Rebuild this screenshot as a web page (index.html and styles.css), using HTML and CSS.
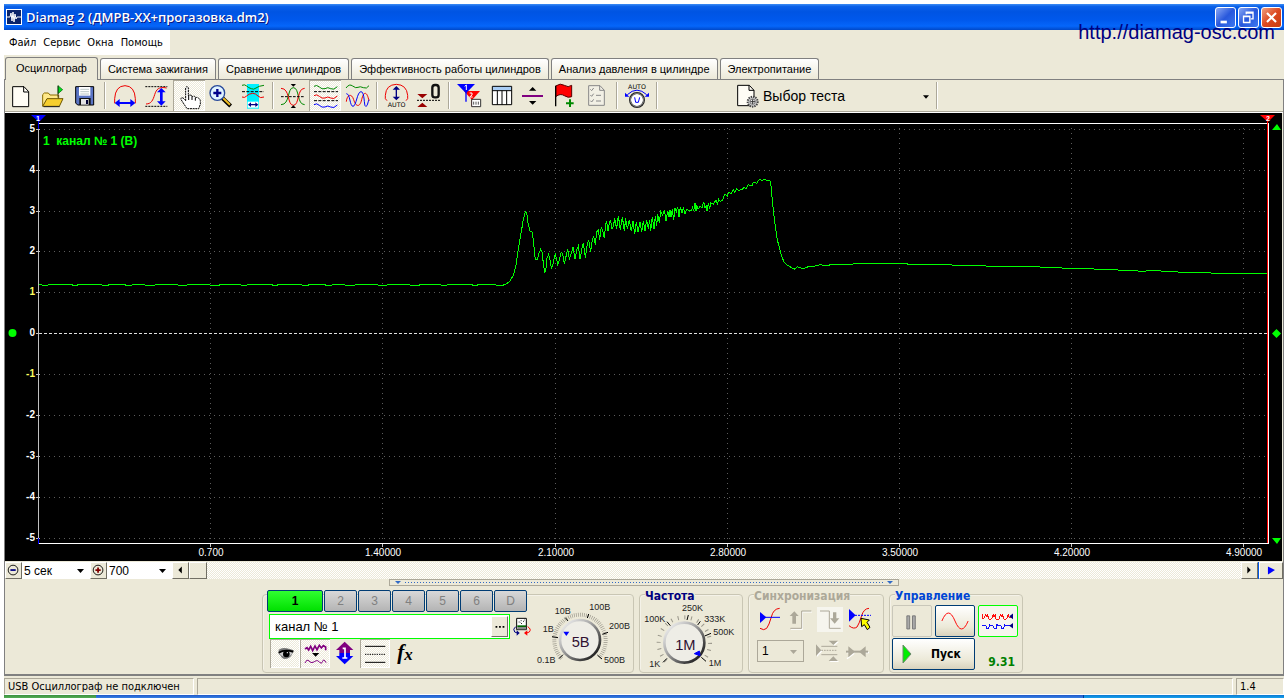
FILE: index.html
```html
<!DOCTYPE html>
<html lang="ru">
<head>
<meta charset="utf-8">
<title>Diamag 2</title>
<link rel="stylesheet" href="styles.css">
</head>
<body>
<div class="window">
  <header class="titlebar">
    <svg class="app-icon" viewBox="0 0 16 16"><rect x=".5" y=".5" width="15" height="15" fill="#0a246a" stroke="#fff"/><path d="M1 8h3l1-4 1 8 1-9 1 10 1-8 1 5 1-2h4" fill="none" stroke="#fff"/></svg>
    <h1 class="title">Diamag 2 (ДМРВ-ХХ+прогазовка.dm2)</h1>
    <div class="win-buttons">
      <button class="win-btn" aria-label="Свернуть"><svg viewBox="0 0 21 21"><path d="M5 14h7v3H5z" fill="#fff"/></svg></button>
      <button class="win-btn" aria-label="Восстановить"><svg viewBox="0 0 21 21"><path d="M8 7V4.500h7.500V12H13M8 5.500h7" fill="none" stroke="#fff" stroke-width="1.500"/><path d="M5 9h7v7H5zM5 9.500h7" fill="none" stroke="#fff" stroke-width="1.500"/></svg></button>
      <button class="win-btn win-close" aria-label="Закрыть"><svg viewBox="0 0 21 21"><path d="M5.500 5.500l10 10M15.500 5.500l-10 10" stroke="#fff" stroke-width="2.400"/></svg></button>
    </div>
    <a class="site" href="#">http://diamag-osc.com</a>
  </header>

  <nav class="menu">
    <button>Файл</button><button>Сервис</button><button>Окна</button><button>Помощь</button>
  </nav>

  <div class="tabs" role="tablist">
    <button class="tab active" role="tab" aria-selected="true">Осциллограф</button>
    <button class="tab" role="tab">Система зажигания</button>
    <button class="tab" role="tab">Сравнение цилиндров</button>
    <button class="tab" role="tab">Эффективность работы цилиндров</button>
    <button class="tab" role="tab">Анализ давления в цилиндре</button>
    <button class="tab" role="tab">Электропитание</button>
  </div>

  <main class="content">
    <div class="toolbar">
      <button class="tool" aria-label="Новый"><svg viewBox="15 240 96 93"><path d="M38 260h34l14 15v45H38z" fill="#fffdf5" stroke="#000" stroke-width="3"/><path d="M71 260v16h15" fill="none" stroke="#000" stroke-width="3"/></svg></button>
      <button class="tool" aria-label="Открыть"><svg viewBox="111 240 96 93"><path d="M128 318v-34l5-5h12l5 6h26v12" fill="#ffe98a" stroke="#8a6d00" stroke-width="3"/><path d="M128 319l13-23h48l-11 23z" fill="#f7cf2e" stroke="#6b5500" stroke-width="3"/><path d="M131 320h48" stroke="#222" stroke-width="3"/><path d="M174 257l14 12-14 12z" fill="#00e020" stroke="#006000" stroke-width="2"/><path d="M174 257v36" stroke="#000" stroke-width="2"/></svg></button>
      <button class="tool" aria-label="Сохранить"><svg viewBox="207 240 96 93"><path d="M227 260h54v55h-48l-6-6z" fill="#5a74c4" stroke="#000" stroke-width="3"/><path d="M237 261h34v26h-34z" fill="#fff"/><path d="M241 268h26M241 275h26M241 282h26" stroke="#9aa" stroke-width="2"/><path d="M238 294h34v21h-34z" fill="#111"/><path d="M243 297h23v17h-23z" fill="#e4e4e4"/><path d="M258 300h6v12h-6z" fill="#003"/></svg></button>
      <span class="sep"></span>
      <button class="tool" aria-label="Растянуть по горизонтали"><svg viewBox="327 240 96 93"><path d="M344 310v-14q2-38 31-39 29 1 31 39v14" fill="none" stroke="#e00" stroke-width="3"/><path d="M344 309l15-12v9h32v-9l15 12-15 12v-9h-32v9z" fill="#00f"/></svg></button>
      <button class="tool" aria-label="Растянуть по вертикали"><svg viewBox="423 240 96 93"><path d="M436 260h66M436 319h66" stroke="#000" stroke-width="3" stroke-dasharray="6 3"/><path d="M438 312c16 0 21-12 26-28s12-25 36-20" fill="none" stroke="#e00" stroke-width="3"/><path d="M484 264l13 13h-9v27h9l-13 13-13-13h9v-27h-9z" fill="#00f"/></svg></button>
      <button class="tool pressed" aria-label="Рука"><svg viewBox="519 240 96 93"><path d="M557 302v-39q4-6 8 0v25q4-6 11 0v3q5-5 10 0v3q5-4 10 1 5 2 5 9v9l-5 13h-35l-19-29q3-7 10-1z" fill="#fff" stroke="#000" stroke-width="3" stroke-dasharray="6 2"/><path d="M566 286v14M576 290v10M586 294v8" stroke="#000" stroke-width="3"/></svg></button>
      <button class="tool" aria-label="Увеличить"><svg viewBox="615 240 96 93"><path d="M667 294l25 24" stroke="#000" stroke-width="12"/><path d="M669 294l21 20" stroke="#eebc20" stroke-width="6"/><circle cx="652" cy="279" r="22" fill="#dff3ff" stroke="#26489a" stroke-width="4"/><path d="M640 279h24M652 267v24" stroke="#00008b" stroke-width="7"/></svg></button>
      <button class="tool" aria-label="Период"><svg viewBox="711 240 96 93"><path d="M741 252h36v74h-36z" fill="#00f0ff"/><path d="M726 256q8-4 14 2t14 8q7 4 14-2t24-8" fill="none" stroke="#080" stroke-width="3"/><path d="M726 275h66" stroke="#000" stroke-width="3" stroke-dasharray="9 4"/><path d="M726 291q8 4 14-3t18-8q9 0 16 8t18 3" fill="none" stroke="#e00" stroke-width="3"/><path d="M743 305h32v18h-32z" fill="#fff"/><path d="M744 314l9-7v5h13v-5l9 7-9 7v-5h-13v5z" fill="#008"/></svg></button>
      <span class="sep"></span>
      <button class="tool" aria-label="Центрировать"><svg viewBox="831 240 96 93"><path d="M843 314c28 0 18-51 37-51s10 51 34 51" fill="none" stroke="#080" stroke-width="3"/><path d="M843 265c28 0 18 51 37 51s10-51 34-51" fill="none" stroke="#e00" stroke-width="3"/><path d="M843 290h72" stroke="#000" stroke-width="3" stroke-dasharray="8 4"/><path d="M872 252h16l-8 8zM872 324h16l-8-8z"/></svg></button>
      <button class="tool pressed" aria-label="Раздельно"><svg viewBox="-33 75 96 93"><g fill="none" stroke-width="3"><path d="M-18 94q8-6 16 2t17 5q8-6 17 0t20-6" stroke="#080"/><path d="M-18 122q8-6 16 2t17 5q8-6 17 0t20-6" stroke="#e00"/><path d="M-18 149q8-6 16 2t17 5q8-6 17 0t20-6" stroke="#00f"/><path d="M-18 110h72M-18 137h72" stroke="#000" stroke-dasharray="9 4"/></g></svg></button>
      <button class="tool" aria-label="Совместно"><svg viewBox="63 75 96 93"><g fill="none" stroke-width="3"><path d="M78 99q10-14 20-6t16 4 16 1 17-6" stroke="#080"/><path d="M79 140c2-22 16-26 22-6s18 26 24 0 16-26 22 4" stroke="#e00"/><path d="M79 116c12 0 10 38 20 38s12-44 24-44 8 44 14 44 6-12 10-20" stroke="#00f"/></g></svg></button>
      <span class="sep"></span>
      <button class="tool" aria-label="Авто масштаб"><svg viewBox="183 75 96 93"><path d="M201 137l-5-6v-10q2-32 33-33 31 1 34 33v10l-5 6" fill="none" stroke="#e00" stroke-width="3"/><path d="M229 93l11 11h-9v21h9l-11 11-11-11h9v-21h-9z" fill="#000080"/><text class="ico-text" x="230" y="156" text-anchor="middle">AUTO</text></svg></button>
      <button class="tool" aria-label="Ноль"><svg viewBox="279 75 96 93"><path d="M292 117h30l-15 13zM292 156h30l-15-13z" fill="#900"/><path d="M291 136h70" stroke="#000" stroke-width="3" stroke-dasharray="6 3"/><rect x="337" y="90" width="19" height="37" rx="8" fill="none" stroke="#111" stroke-width="7"/></svg></button>
      <span class="sep"></span>
      <button class="tool" aria-label="Маркеры"><svg viewBox="399 75 96 93"><path d="M432 108h48l-24 27z" fill="#f00"/><path d="M456 125v29" stroke="#f00" stroke-width="4"/><path d="M411 87h54l-27 28z" fill="#00f"/><path d="M438 112v28" stroke="#00f" stroke-width="4"/><path d="M434 94l5-4v15" fill="none" stroke="#fff" stroke-width="3"/><path d="M449 114h7v6l-7 6h9" fill="none" stroke="#fff" stroke-width="3"/><path d="M455 133h27v22h-27z" fill="#fff" stroke="#333" stroke-width="3"/><path d="M461 140v9M468 140v9M475 140v9" stroke="#555" stroke-width="3"/></svg></button>
      <button class="tool" aria-label="Таблица"><svg viewBox="495 75 96 93"><path d="M517 94h58v55h-58z" fill="#fff"/><path d="M517 94h58v12h-58z" fill="#a9cdf5"/><path d="M517 94h58v55h-58zM517 107h58M532 107v42M546 107v42M560 107v42" fill="none" stroke="#000" stroke-width="3"/></svg></button>
      <button class="tool" aria-label="Разделить"><svg viewBox="591 75 96 93"><path d="M627 107h22l-11-11zM627 138h22l-11 11z"/><path d="M606 123h63" stroke="#800080" stroke-width="6"/></svg></button>
      <button class="tool" aria-label="Добавить флаг"><svg viewBox="687 75 96 93"><path d="M707 93q14-10 26-2t22 0v34q-10 5-22-3t-26 3z" fill="#f00" stroke="#500" stroke-width="3"/><path d="M707 92v62" stroke="#000" stroke-width="4"/><path d="M738 145h23M750 133v23" stroke="#080" stroke-width="6"/></svg></button>
      <button class="tool" aria-label="Отчет"><svg viewBox="783 75 96 93"><path d="M806 92h34l13 14v45h-47z" fill="#f2f0e5" stroke="#888" stroke-width="3"/><path d="M839 92v14h14M811 103l4 4 6-8M811 120l4 4 6-8M811 137l4 4 6-8M828 121h15M828 138h15" fill="none" stroke="#888" stroke-width="3"/></svg></button>
      <span class="sep"></span>
      <button class="tool" aria-label="Авто"><svg viewBox="903 75 96 93"><text class="ico-text" x="951" y="101" text-anchor="middle">AUTO</text><path d="M922 119q29-27 58 0" fill="none" stroke="#00f" stroke-width="3"/><path d="M915 113v12h13zM987 113v12h-13z" fill="#00f"/><circle cx="951" cy="135" r="21" fill="#fff" stroke="#222" stroke-width="6"/><circle cx="951" cy="135" r="20" fill="none" stroke="#aaa" stroke-width="2"/><path d="M944 127l3 15h8l4-15" fill="none" stroke="#00f" stroke-width="3"/></svg></button>
      <span class="sep"></span>
      <label class="test">
        <svg class="test-icon" viewBox="261 87 69 72"><path d="M263 91h35l14 15v46h-49z" fill="#fffdf5" stroke="#000" stroke-width="3"/><path d="M297 91v15h15" fill="none" stroke="#000" stroke-width="3"/><circle cx="308" cy="140" r="15" fill="#c8c8c8" stroke="#444" stroke-width="6" stroke-dasharray="4 3"/><circle cx="308" cy="140" r="8" fill="#eee" stroke="#444" stroke-width="2"/><path d="M308 133v14M301 140h14" stroke="#333" stroke-width="3"/></svg>
        <select class="test-select" aria-label="Выбор теста"><option>Выбор теста</option></select>
        <svg class="caret-small" viewBox="0 0 7 4"><path d="M0 0h7L3.500 4z"/></svg>
      </label>
      <span class="sep"></span>
    </div>

    <svg class="chart" viewBox="5 113 1277 448" role="img" aria-label="Осциллограмма">
      <rect x="5" y="113" width="1277" height="448"/>
      <g class="grid">
        <path d="M44 129.500H1266M44 170.500H1266M44 211.500H1266M44 251.500H1266M44 292.500H1266M44 374.500H1266M44 415.500H1266M44 456.500H1266M44 497.500H1266M44 538.500H1266"/>
        <path d="M210.500 128V542M382.500 128V542M555.500 128V542M727.500 128V542M899.500 128V542M1071.500 128V542M1243.500 128V542"/>
      </g>
      <path class="zero" d="M39 333.500H1267"/>
      <path class="frame" d="M38 123.500H1267M38 543.500H1269M1268.500 123V544"/>
      <path class="axis" d="M38.500 123V544M36 129.500h4M36 170.500h4M36 211.500h4M36 251.500h4M36 292.500h4M36 333.500h4M36 374.500h4M36 415.500h4M36 456.500h4M36 497.500h4M36 538.500h4M210.500 544v3M382.500 544v3M555.500 544v3M727.500 544v3M899.500 544v3M1071.500 544v3M1243.500 544v3"/>
      <path d="M1267.500 118V543" stroke="#f00"/>
      <path d="M38.500 118v11M38.500 538v6" stroke="#00f"/>
      <path d="M31 115h15l-7 7z" fill="#00f"/><path d="M1260 115h15l-7 7z" fill="#f00"/>
      <g class="mark"><text x="38" y="121">1</text><text x="1268" y="121">2</text></g>
      <path d="M1272 130h9l-4-6zM1272 538h9l-4 6zM1272 333.500l4.500-4.500 4.500 4.500-4.500 4.500z" fill="#0f0"/>
      <circle cx="12.500" cy="333" r="4" fill="#0f0"/>
      <g class="y-labels"><text x="35" y="132">5</text><text x="35" y="173">4</text><text x="35" y="214">3</text><text x="35" y="254">2</text><text class="unit" x="35" y="295">1</text><text x="35" y="336">0</text><text class="unit" x="35" y="377">-1</text><text x="35" y="418">-2</text><text x="35" y="459">-3</text><text x="35" y="500">-4</text><text x="35" y="541">-5</text></g>
      <g class="x-labels"><text x="211" y="556">0.700</text><text x="383" y="556">1.40000</text><text x="556" y="556">2.10000</text><text x="728" y="556">2.80000</text><text x="900" y="556">3.50000</text><text x="1072" y="556">4.20000</text><text x="1244" y="556">4.90000</text></g>
      <text class="ch-name" x="43" y="145">1&#160; канал № 1 (В)</text>
      <polyline class="trace" points="39,284 45,286 51,284 59,285 67,284 70,284 75,286 80,284 90,284 96,284 98,284 106,286 111,284 116,285 122,284 129,286 135,284 141,284 145,285 152,286 158,284 166,285 174,284 178,285 184,286 190,284 198,285 205,284 210,285 217,286 222,284 231,285 238,284 244,286 250,284 258,285 266,284 270,284 275,286 280,284 290,284 298,284 306,286 311,284 316,285 322,284 329,286 335,284 341,284 345,285 352,286 358,284 366,285 374,284 378,285 384,286 390,284 398,285 405,284 410,285 417,286 422,284 431,285 438,284 444,286 450,284 458,285 466,284 470,284 475,286 480,284 490,284"/>
      <svg x="490" y="160" width="340" height="130" viewBox="0 0 1020 390"><polyline class="trace-fine" points="0,373 18,375 36,377 50,371 60,363 70,346 78,315 86,260 94,215 100,178 106,154 110,158 114,190 120,213 126,216 130,240 136,300 142,298 147,280 152,268 156,275 160,310 164,340 168,325 171,295 176,283 180,300 184,325 188,318 192,297 196,283 200,297 203,313 208,300 213,278 218,280 223,313 229,285 233,268 238,297 244,280 249,262 255,298 260,270 265,258 270,298 276,265 280,248 286,293 291,258 296,240 302,275 307,240 311,228 316,255 320,215 325,210 329,240 334,200 338,212 343,235 347,190 350,184 354,213 358,188 362,182 366,208 370,200 374,175 380,207 385,167 391,210 397,170 403,213 407,175 412,208 418,180 424,214 429,183 434,223 439,186 444,216 450,187 455,217 460,183 465,214 470,180 475,207 479,180 482,214 487,170 492,207 496,168 500,198 503,163 508,188 512,155 518,165 523,150 528,182 533,152 537,172 540,150 543,172 547,148 551,180 555,145 559,155 563,140 567,170 571,142 576,158 580,142 585,163 590,148 598,152 605,150 608,142 611,153 615,130 618,152 620,135 624,148 630,140 637,142 641,125 645,145 649,138 651,152 655,128 659,148 662,128 670,133 678,120 682,132 686,118 690,124 698,120 704,103 712,108 716,98 724,100 730,90 735,97 740,86 746,92 756,88 762,82 768,86 775,74 786,78 790,66 800,70 808,58 816,62 822,58 828,60 838,60 842,66 846,110 850,150 856,200 862,240 868,262 874,287 882,305 890,315 900,320 913,328 922,320 940,326 955,320 975,318 990,314 1005,317 1020,315"/></svg>
      <polyline class="trace" points="829,265 834,264 838,265 843,264 850,265 856,263 862,264 870,263 880,264 888,263 896,264 904,263 911,265 918,264 926,265 932,264 940,265 948,264 956,266 964,265 972,266 982,265 990,267 998,266 1010,267 1018,266 1028,267 1036,266 1044,268 1052,267 1062,268 1070,268 1080,269 1090,268 1098,270 1108,269 1118,270 1128,270 1138,271 1146,271 1156,270 1166,272 1174,271 1182,273 1192,272 1200,273 1208,272 1214,274 1224,273 1232,274 1242,273 1250,274 1258,273 1267,273"/>
    </svg>

    <div class="scroll-row">
      <button class="raised" aria-label="Уменьшить"><svg viewBox="0 0 17 17"><circle cx="8" cy="8" r="5.500" fill="none" stroke="#000"/><path d="M5 8h6" stroke="#000080" stroke-width="2"/></svg></button>
      <label class="combo range"><select aria-label="Длительность"><option>5 сек</option></select><svg class="caret" viewBox="0 0 7 4"><path d="M0 0h7L3.500 4z"/></svg></label>
      <button class="raised" aria-label="Увеличить"><svg viewBox="0 0 17 17"><circle cx="8" cy="8" r="5.500" fill="none" stroke="#000"/><path d="M5 8h6M8 5v6" stroke="#800000" stroke-width="2"/></svg></button>
      <label class="combo step"><select aria-label="Шаг"><option>700</option></select><svg class="caret" viewBox="0 0 7 4"><path d="M0 0h7L3.500 4z"/></svg></label>
      <button class="raised" aria-label="Влево"><svg viewBox="0 0 17 17"><path d="M10 4v8L6 8z"/></svg></button>
      <span class="raised thumb"></span>
      <span class="track"></span>
      <button class="raised" aria-label="Вправо"><svg viewBox="0 0 17 17"><path d="M6 4v8l4-4z"/></svg></button>
      <span class="mark-line"></span>
      <button class="raised play" aria-label="Воспроизвести"><svg viewBox="0 0 17 17"><path d="M5 4v9l8-5z" fill="#00f"/></svg></button>
    </div>

    <div class="splitter"><i></i><span></span><i></i></div>

    <div class="panels">
      <section class="group channel">
        <div class="channel-left">
          <div class="channels">
            <button class="ch on">1</button><button class="ch">2</button><button class="ch">3</button><button class="ch">4</button><button class="ch">5</button><button class="ch">6</button><button class="ch">D</button>
          </div>
          <div class="name-row">
            <div class="name-box"><input type="text" value="канал № 1" aria-label="Имя канала"><button class="raised dots" aria-label="Выбрать"><svg viewBox="0 0 17 19"><path d="M4 9h2v2H4zM8 9h2v2H8zM12 9h2v2h-2z"/></svg></button></div>
            <button class="plain swap" aria-label="Датчик"><svg viewBox="786 136 60 63"><path d="M800 143h29v34h-29z" fill="#fff" stroke="#000" stroke-width="3"/><path d="M802 164h26v5h-26z" fill="#060"/><path d="M802 169h26v7h-26z" fill="#888"/><path d="M806 154h3M812 150h3M819 152h3M822 148h2M812 156l4 4" stroke="#333" stroke-width="3"/><path d="M797 168q-10 7-3 16l8 3" fill="none" stroke="#000080" stroke-width="3"/><path d="M800 179l9 8-9 8z" fill="#000080"/><path d="M833 168q12 7 5 16l-8 3" fill="none" stroke="#f00" stroke-width="3"/><path d="M832 179l-10 8 10 8z" fill="#f00"/></svg></button>
          </div>
          <div class="ch-tools">
            <button class="ch-tool pressed" aria-label="Показать"><svg viewBox="60 210 90 87"><path d="M86 242q10-8 24-4l12 3 9 3-2 6q-6 20-24 20-10-1-13-10l-6-5z" fill="#777"/><path d="M86 252q16-14 42 0-8 12-22 12-12-2-20-12z" fill="#ccc"/><circle cx="109" cy="255" r="10"/><path d="M86 251q18-11 44-3" fill="none" stroke="#000" stroke-width="5"/><circle cx="112" cy="251" r="2" fill="#fff"/></svg></button>
            <button class="ch-tool pressed" aria-label="Фильтр"><svg viewBox="150 210 90 87"><path d="M165 240l6-4 5 7 6-11 6 13 7-14 6 11 7-13 6 8 6-7 7 4v10" fill="none" stroke="#800080" stroke-width="5"/><path d="M186 252h22l-11 11z"/><path d="M165 282q6-13 12-6t12 4 10-5 10 5 9-3 10 4" fill="none" stroke="#800080" stroke-width="3"/></svg></button>
            <button class="ch-tool" aria-label="Сдвиг"><svg viewBox="240 210 90 87"><path d="M284 218l26 25h-10v9h-32v-9h-10z" fill="#800080"/><path d="M284 286l26-25h-10v-9h-32v9h-10z" fill="#00f"/><path d="M278 238h7v27M277 267h15" fill="none" stroke="#fff" stroke-width="5"/></svg></button>
            <button class="ch-tool pressed" aria-label="Линии"><svg viewBox="330 210 90 87"><path d="M345 232h61M345 280h61" stroke="#000" stroke-width="3"/><path d="M345 256h61" stroke="#000" stroke-width="3" stroke-dasharray="4 3"/></svg></button>
            <button class="ch-tool fx"><i>f</i><sub>x</sub></button>
          </div>
        </div>
        <svg class="dial" viewBox="12 21 294 240" role="img" aria-label="Диапазон">
          <defs><linearGradient id="rim" x1="0" y1="0" x2="1" y2="1"><stop offset="0" stop-color="#fff"/><stop offset=".4" stop-color="#aaa"/><stop offset="1" stop-color="#000"/></linearGradient></defs>
          <path class="ticks" d="M95 220A77 77 0 1 1 205 220" stroke-dasharray="2 4"/>
          <path class="major" d="M99 209l-12 12M84 158l-18-3M114 108l-8-10M172 99l4-12M217 148l17-6M202 210l14 12"/>
          <circle cx="150" cy="165" r="60" fill="#eeede6" stroke="url(#rim)" stroke-width="8"/>
          <path d="M100 140h18l-9 13z" fill="#00f"/>
          <g class="dial-labels"><text x="21" y="233">0.1В</text><text x="38" y="142">1В</text><text x="74" y="86">10В</text><text x="178" y="75">100В</text><text x="237" y="133">200В</text><text x="222" y="235">500В</text></g>
          <text class="dial-value" x="152" y="186">5В</text>
        </svg>
      </section>

      <section class="group freq">
        <h2 class="legend">Частота</h2>
        <svg class="dial-freq" viewBox="330 45 306 216" role="img" aria-label="Частота">
          <path class="ticks" d="M408 228A77 77 0 1 1 518 228" stroke-dasharray="3 17"/>
          <path class="major" d="M411 220l-12 12M421 122l-10-12M471 105l4-15M503 120l8-11M524 153l19-8M514 217l14 12"/>
          <circle cx="463" cy="173" r="60" fill="#eeede6" stroke="url(#rim)" stroke-width="8"/>
          <path d="M493 206l15-8 2 14z" fill="#00f" stroke="#00f" stroke-width="3"/>
          <g class="dial-labels"><text x="343" y="112">100K</text><text x="456" y="79">250K</text><text x="523" y="112">333K</text><text x="550" y="151">500K</text><text x="358" y="245">1K</text><text x="536" y="242">1M</text></g>
          <text class="dial-value" x="466" y="194">1M</text>
        </svg>
      </section>

      <section class="group sync">
        <h2 class="legend muted">Синхронизация</h2>
        <div class="sync-row">
          <button class="plain sync-btn" aria-label="Уровень"><svg viewBox="45 105 90 90"><path d="M60 175q12 8 20 0 7-9 14-34 6-25 25-26" fill="none" stroke="#e00" stroke-width="3"/><path d="M60 142h60" stroke="#00f" stroke-width="3"/><path d="M60 126v33l19-17z" fill="#00f"/></svg></button>
          <button class="plain sync-btn" aria-label="Фронт" disabled><svg viewBox="135 105 90 90"><path d="M153 178h34v-52h29" fill="none" stroke="#fff" stroke-width="3"/><path d="M151 175h34v-52h29" fill="none" stroke="#aca899" stroke-width="3"/><path d="M163 124l13 14h-8v23h-11v-23h-8z" fill="#aca899"/></svg></button>
          <button class="plain sync-btn" aria-label="Спад" disabled><svg viewBox="228 105 90 90"><path class="dither-box" d="M234 111h78v75h-78z"/><path d="M243 123h28v52h34" fill="none" stroke="#aca899" stroke-width="3"/><path d="M282 127h10v18h9l-14 16-14-16h9z" fill="#aca899"/></svg></button>
          <button class="plain sync-btn" aria-label="Захват"><svg viewBox="318 105 90 90"><path d="M330 167q14 12 24 4 6-8 14-34 6-21 22-22" fill="none" stroke="#e00" stroke-width="3"/><path d="M330 136h66" stroke="#00f" stroke-width="3" stroke-dasharray="6 3"/><path d="M330 117v38l20-19z" fill="#00f"/><path d="M366 145l25 5-7 7 9 15-8 7-9-15-8 6z" fill="#ff0" stroke="#000" stroke-width="3"/></svg></button>
        </div>
        <div class="sync-row">
          <label class="sync-select"><select aria-label="Канал синхронизации"><option>1</option></select><svg class="caret" viewBox="0 0 7 4"><path d="M0 0h7L3.500 4z" fill="#aca899"/></svg></label>
          <button class="plain sync-btn" aria-label="Ширина" disabled><svg viewBox="216 201 90 90"><g transform="translate(3 3)" fill="#fff"><path d="M228 223v35l16-17zM266 212h28l-14 13zM266 273h28l-14-14z"/></g><path d="M228 223v35l16-17zM266 212h28l-14 13zM266 273h28l-14-14z" fill="#aca899"/><path d="M244 229h48M244 254h48" stroke="#aca899" stroke-width="3"/><path d="M244 241h48" stroke="#aca899" stroke-width="3" stroke-dasharray="5 3"/></svg></button>
          <button class="plain sync-btn" aria-label="Сжать" disabled><svg viewBox="306 201 90 90"><path d="M321 248h24M363 248h24M321 266l20-15" stroke="#fff" stroke-width="4"/><path d="M318 245h66" stroke="#aca899" stroke-width="6"/><path d="M325 229v33l20-17zM377 229v33l-20-17z" fill="#aca899"/></svg></button>
        </div>
      </section>

      <section class="group control">
        <h2 class="legend blue">Управление</h2>
        <div class="control-grid">
          <button class="big off" aria-label="Пауза" disabled><svg viewBox="0 0 40 32"><path d="M14.500 10.500h3v14h-3zM20.500 10.500h3v14h-3z" fill="#aaa" stroke="#777"/></svg></button>
          <button class="big" aria-label="Однократно"><svg viewBox="0 0 40 32"><path d="M6 16q7-17 14 0t14 0" fill="none" stroke="#f00"/></svg></button>
          <button class="big green" aria-label="Непрерывно"><svg viewBox="0 0 40 32"><g class="crisp" fill="none"><path d="M3 8v5h2l2-4 1 3 1-3 1 5h3l2-5 1 3 1-3 1 5h3l2-5 1 3 1-3 1 5h3l2-5 1 3h4" stroke="#f00"/><path d="M3 21h4l1 3h2l1-5 1 2h3l1 3h2l1-5 1 2h3l1 3h2l1-5 1 2h6" stroke="#00f"/></g><path d="M36 8v6l-4-3zM36 18v6l-4-3z" fill="#000080"/></svg></button>
          <button class="big start"><svg viewBox="0 0 12 20"><path d="M2 1v18l8-9z" fill="#0e0" stroke="#6a8a6a"/></svg>Пуск</button>
          <output class="rate">9.31</output>
        </div>
      </section>
    </div>
  </main>

  <footer class="status">
    <span class="cell first">USB Осциллограф не подключен</span>
    <span class="cell wide"></span>
    <span class="cell last">1.4</span>
  </footer>
</div>
<div class="taskbar"><span class="start-edge"></span><span class="tasks"></span><span class="tray"></span></div>
</body>
</html>
```
FILE: styles.css
```css
* { box-sizing: border-box; }
body {
  margin: 0;
  background: #fff;
  color: #000;
  font: 11px "Liberation Sans", Arial, sans-serif;
}
button, select, input { font: inherit; color: inherit; margin: 0; padding: 0; border: 0; background: none; border-radius: 0; }
select { appearance: none; width: 100%; height: 100%; }
svg { display: block; }
h1, h2 { margin: 0; }

.window { margin: 4px 4px 0; background: #ece9d8; }

.titlebar {
  position: relative;
  display: flex;
  align-items: center;
  gap: 4px;
  height: 26px;
  padding: 0 2px;
  background: linear-gradient(#3c8cf4, #0a60e8 10%, #0054e3 30%, #0058ec 60%, #0566fa 85%, #0048c8);
}
.app-icon { width: 16px; height: 16px; }
.title { flex: 1; color: #fff; font: 600 13px "Open Sans", "Noto Sans", sans-serif; text-shadow: 1px 1px #0a1883; }
.win-buttons { display: flex; gap: 2px; }
.win-btn { width: 21px; height: 21px; border: 1px solid #fff; border-radius: 3px; background: linear-gradient(135deg, #8aa8f4, #2858dc 50%, #3c78f0); }
.win-btn svg { width: 100%; height: 100%; }
.win-close { background: linear-gradient(135deg, #f0a080, #dc4820 50%, #c83c10); }
.site { position: absolute; right: 9px; top: 16px; color: #000080; font-size: 20px; line-height: 24px; text-decoration: none; }

.menu { display: inline-flex; gap: 7px; height: 25px; padding: 0 7px 0 5px; background: #fff; font: 11px "DejaVu Sans Condensed", "DejaVu Sans", sans-serif; }

.tabs { display: flex; align-items: flex-end; gap: 2px; height: 24px; padding: 2px 1px 0; }
.tab {
  height: 21px;
  padding: 0 7px;
  border: 1px solid #808080;
  border-bottom: 0;
  border-radius: 3px 3px 0 0;
  background: linear-gradient(#fff, #ece9d8);
  font-size: 11px;
  white-space: nowrap;
}
.tab.active { position: relative; height: 23px; margin-bottom: -1px; padding: 0 10px 2px; background: #ece9d8; }

.content { display: flex; flex-direction: column; border: 1px solid #808080; border-width: 1px 1px 2px; border-bottom-style: double; }

.toolbar { display: flex; height: 33px; border-bottom: 1px solid #fff; box-shadow: inset 0 -1px #aca899; }
.tool { flex: none; width: 32px; height: 31px; }
.tool svg { width: 32px; height: 31px; }
.pressed { background: repeating-conic-gradient(#fff 0 25%, #ece9d8 0 50%) 0 0 / 2px 2px; }
.tool.pressed { box-shadow: inset 1px 1px #aca899, inset -1px -1px #fff; }
.sep { flex: none; width: 8px; height: 27px; margin-top: 2px; background: linear-gradient(90deg, #aca899 1px, #fff 1px 2px, transparent 2px) 3px 0 no-repeat; }
.ico-text { font: 19px "DejaVu Sans", sans-serif; }
.test { position: relative; flex: none; width: 272px; height: 31px; }
.test-icon { position: absolute; left: 76px; top: 4px; width: 23px; height: 24px; pointer-events: none; }
.test-select { padding-left: 102px; font-size: 14px; }
.caret-small { position: absolute; right: 4px; top: 15px; width: 6px; height: 4px; pointer-events: none; }

.chart { width: calc(100% - 1px); height: auto; font-family: "Liberation Sans", Arial, sans-serif; }
.grid path { stroke: #5c5c5c; stroke-dasharray: 1 4; }
.zero { stroke: #e0e0e0; stroke-dasharray: 3 2; }
.frame { stroke: #fff; fill: none; }
.axis { stroke: #c0c0c0; }
.mark { fill: #fff; font-size: 7px; font-weight: bold; text-anchor: middle; }
.y-labels { fill: #fff; font-size: 10px; font-weight: bold; text-anchor: end; }
.unit { fill: #ffff60; }
.x-labels { fill: #fff; font-size: 10px; text-anchor: middle; }
.ch-name { fill: #0f0; font-size: 12px; font-weight: bold; }
.trace { fill: none; stroke: #0f0; shape-rendering: crispEdges; }
.trace-fine { fill: none; stroke: #0f0; stroke-width: 3; shape-rendering: crispEdges; }
.crisp { shape-rendering: crispEdges; }

.scroll-row { display: flex; height: 18px; padding-top: 1px; }
.raised { flex: none; width: 17px; height: 17px; background: #ece9d8; border: 1px solid; border-color: #fff #716f64 #716f64 #fff; }
.raised svg { width: 100%; height: 100%; }
.combo, .sync-select { position: relative; background: #fff; font-size: 12px; }
.combo select { padding-left: 2px; }
.caret { position: absolute; right: 6px; top: 7px; width: 7px; height: 4px; pointer-events: none; }
.range { width: 68px; }
.step { width: 65px; }
.thumb { width: 18px; }
.track { flex: 1; background: repeating-conic-gradient(#fff 0 25%, #ece9d8 0 50%) 0 0 / 2px 2px; }
.mark-line { width: 1px; background: #0058e8; }
.play { width: 24px; }

.splitter { display: flex; align-items: center; justify-content: space-between; width: 510px; height: 7px; margin: 0 auto; padding: 0 5px; border: 1px solid #aca899; }
.splitter i { border: 3px solid transparent; border-top-color: #316ac5; border-bottom: 0; }
.splitter span { flex: 1; height: 1px; margin: 0 4px; background: repeating-linear-gradient(90deg, #316ac5 0 1px, transparent 1px 3px); }

.panels { display: flex; justify-content: center; gap: 5px; padding: 4px 3px 1px 0; }
.group { position: relative; height: 83px; }
.group::before { content: ""; position: absolute; inset: 4px 0 0; border: 1px solid #c9c6b4; border-radius: 4px; box-shadow: inset 1px 1px #f4f2e8; pointer-events: none; }
.legend { position: relative; width: max-content; margin-left: 6px; background: #ece9d8; color: #000080; font: bold 12px/12px "DejaVu Sans Condensed", "DejaVu Sans", sans-serif; }
.legend.muted { color: #aca899; }
.legend.blue { color: #0046d5; }

.channel { display: flex; width: 372px; padding-left: 5px; }
.channel-left { position: relative; width: 267px; }
.channels { display: flex; gap: 1px; }
.ch { width: 33px; height: 22px; border: 1px solid #003c74; border-radius: 2px; background: linear-gradient(#d8d8d8, #b4b4b4); color: #808080; font-size: 12px; }
.ch.on { width: 56px; background: linear-gradient(#30ff30, #00e000); color: #000; font-weight: bold; }
.name-row { display: flex; align-items: center; gap: 2px; margin: 2px 0 0 2px; }
.name-box { display: flex; width: 241px; height: 25px; padding: 1px; border: 1px solid #0f0; background: #fff; }
.name-box input { flex: 1; min-width: 0; padding-left: 4px; font-size: 13px; }
.dots { height: 21px; }
.plain { flex: none; }
.swap, .swap svg { width: 20px; height: 21px; }
.ch-tools { display: flex; padding-left: 3px; }
.ch-tool { width: 30px; height: 29px; }
.ch-tool svg { width: 30px; height: 29px; }
.ch-tool.pressed { box-shadow: inset 1px 1px #aca899, inset -1px -1px #fff; }
.fx { font: bold italic 21px/24px "Liberation Serif", serif; }
.fx sub { font-size: 17px; vertical-align: -1px; }
.dial { position: relative; width: 98px; height: 80px; margin-top: 2px; }
.freq { width: 104px; }
.dial-freq { position: relative; width: 102px; height: 72px; margin: -2px 0 0 1px; }
.ticks { fill: none; stroke: #99968a; stroke-width: 12; }
.major { stroke: #000; stroke-width: 3; fill: none; }
.dial-labels { font-size: 27px; fill: #222; }
.dial-value { font-size: 44px; fill: #301030; text-anchor: middle; }

.sync { width: 136px; }
.sync-row { display: flex; padding-left: 7px; margin-top: 3px; }
.sync-row + .sync-row { margin-top: 2px; }
.sync-btn, .sync-btn svg { width: 30px; height: 30px; }
.dither-box { fill: #f6f5ee; }
.sync-select { width: 47px; height: 22px; margin: 3px 8px 0 2px; border: 1px solid #aca899; background: #ece9d8; }
.sync-select select { padding-left: 4px; }
.sync-select .caret { top: 9px; }

.control { width: 134px; }
.control-grid { display: grid; grid-template-columns: 40px 40px 40px; gap: 1px 3px; margin: 3px 0 0 3px; position: relative; }
.big { height: 32px; border: 1px solid #003c74; border-radius: 2px; background: linear-gradient(#fff, #ece9d8 70%, #d8d2bd); }
.big svg { width: 38px; height: 30px; }
.big.off { border-color: #c9c7ba; background: #ece9d8; }
.big.green { border-color: #0f0; background: #f6f5ee; }
.big.start { grid-column: span 2; display: flex; align-items: center; gap: 18px; padding-left: 8px; font: bold 12px "DejaVu Sans Condensed", "DejaVu Sans", sans-serif; }
.big.start svg { width: 12px; height: 20px; }
.rate { align-self: end; justify-self: end; margin-right: 3px; color: #008000; font: bold 12px/16px "DejaVu Sans Condensed", "DejaVu Sans", sans-serif; }

.status { display: flex; gap: 3px; height: 19px; padding-top: 2px; font: 11px/16px "DejaVu Sans Condensed", "DejaVu Sans", sans-serif; }
.cell { border: 1px solid; border-color: #aca899 #fff #fff #aca899; padding-left: 3px; white-space: nowrap; }
.first { width: 190px; }
.wide { flex: 1; }
.last { width: 48px; }

.taskbar { display: flex; height: 4px; margin: 0 4px; }
.start-edge { width: 92px; background: linear-gradient(#3c9040, #5cb85c); }
.tasks { flex: 1; background: linear-gradient(#2058c8, #4090f0); }
.tray { width: 201px; border-left: 1px solid #003c9c; background: linear-gradient(#0c78d0, #18b0f8); }
```
